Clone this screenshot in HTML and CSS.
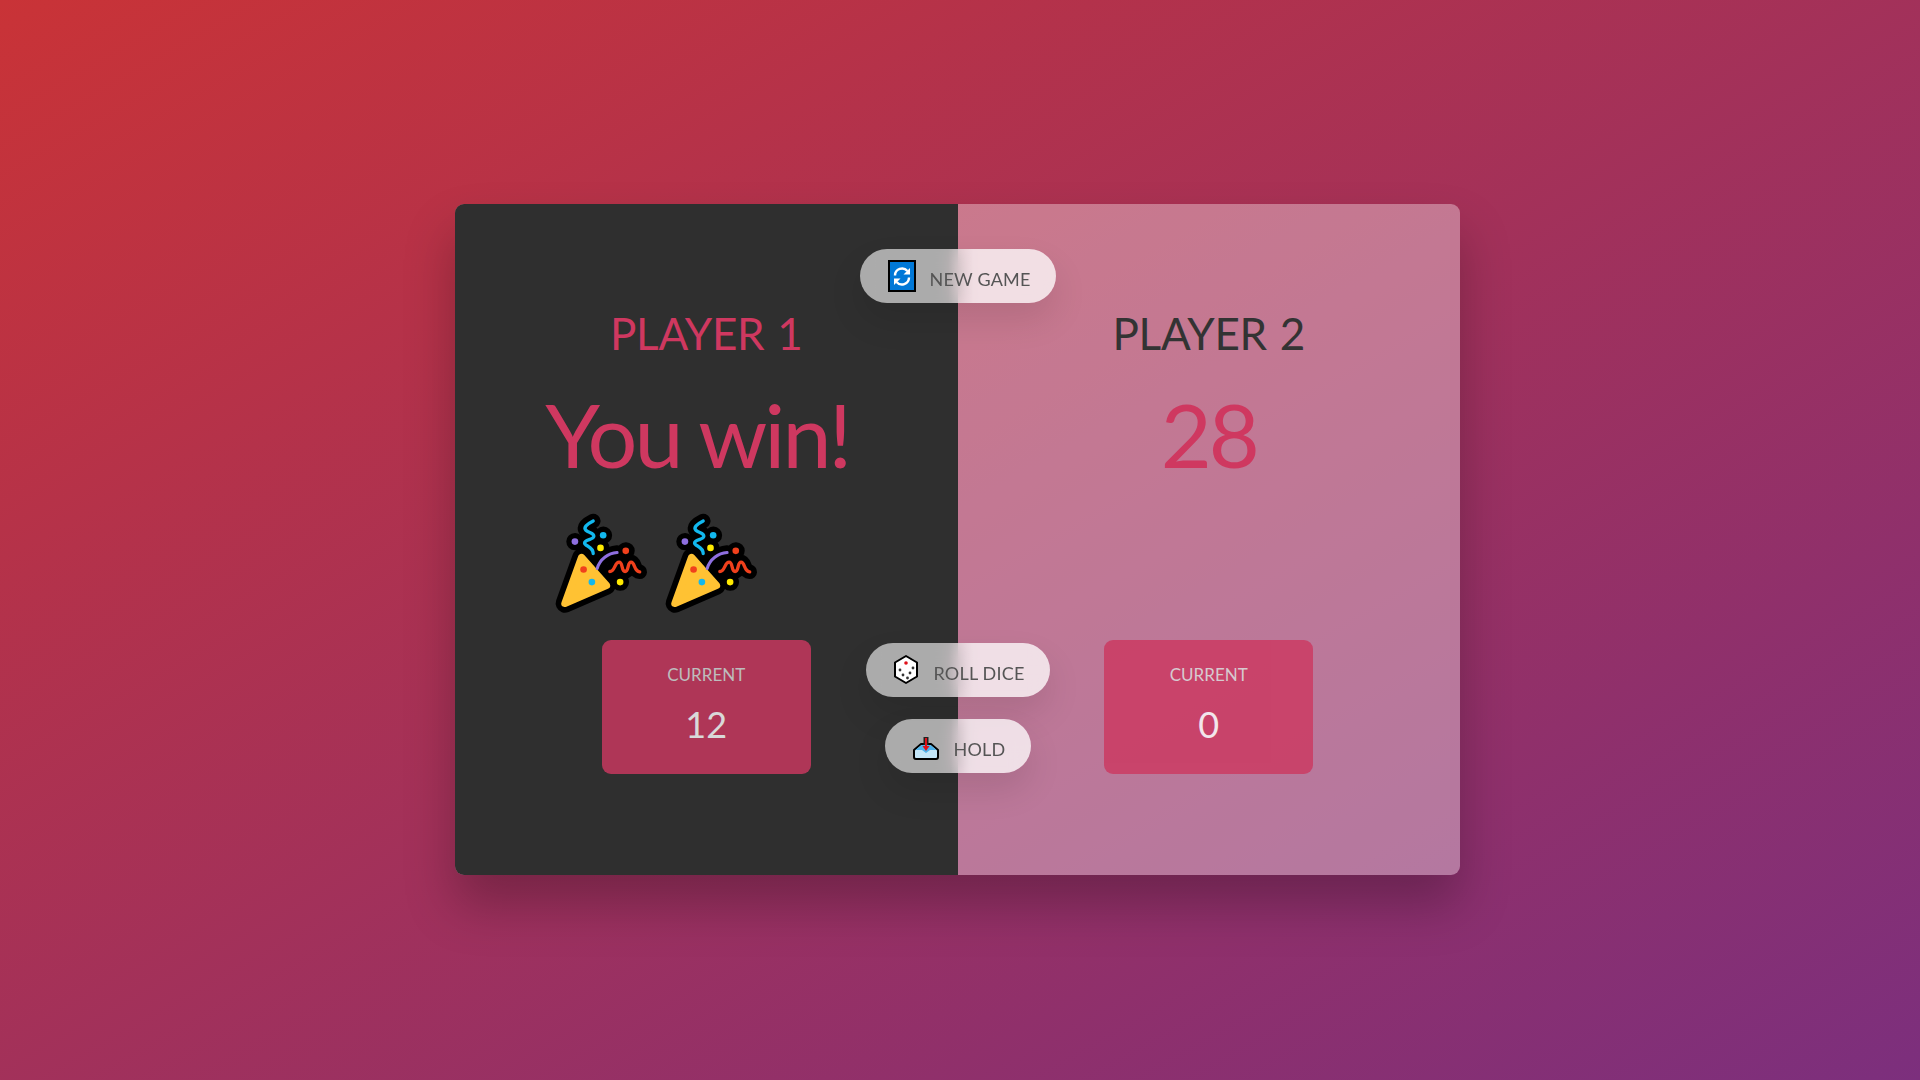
FILE: index.html
```html
<!DOCTYPE html>
<html>
	<head>
		<title>Pig Game</title>
		<meta name="viewport" content="width=device-width, initial-scale=1.0"/>
		<link rel="stylesheet" href="styles.css">
	</head>
	<body>
		<main class="game">
			<section class="player player-winner">
				<h2 class="name">Player 1</h2>
				<div class="score score-win">
					<p>You win!</p>
					<div class="poppers">
						<svg class="popper" viewBox="24 24 331 331"><use href="#popper"/></svg>
						<svg class="popper" viewBox="24 24 331 331"><use href="#popper"/></svg>
					</div>
				</div>
				<div class="current">
					<p class="current-label">Current</p>
					<p class="current-score">12</p>
				</div>
			</section>
			<section class="player">
				<h2 class="name">Player 2</h2>
				<div class="score"><p>28</p></div>
				<div class="current">
					<p class="current-label">Current</p>
					<p class="current-score">0</p>
				</div>
			</section>
			<button class="btn btn-new">
				<svg class="icon" viewBox="0 0 28 32">
					<rect x="1" y="1" width="26" height="30" fill="#0078d7" stroke="#000" stroke-width="2"/>
					<path d="M7 15.500a7 7 0 0 1 12.400-4.400" fill="none" stroke="#fff" stroke-width="2.400"/>
					<path d="M22 8v6.500h-6.500z" fill="#fff"/>
					<path d="M21 17.500a7 7 0 0 1-12.400 4.400" fill="none" stroke="#fff" stroke-width="2.400"/>
					<path d="M6 25v-6.500h6.500z" fill="#fff"/>
				</svg>
				New game
			</button>
			<button class="btn btn-roll">
				<svg class="icon" viewBox="0 0 28 32">
					<path d="M14 2l11 6.500v14L14 29 3 22.500v-14z" fill="#fff" stroke="#000" stroke-width="2" stroke-linejoin="round"/>
					<circle cx="14" cy="9" r="1.800" fill="#e0101a"/>
					<circle cx="8" cy="16" r="1.400" fill="#333"/>
					<circle cx="11" cy="21" r="1.400" fill="#333"/>
					<circle cx="21" cy="14" r="1.400" fill="#333"/>
					<circle cx="18" cy="19" r="1.400" fill="#333"/>
					<circle cx="15.500" cy="24" r="1.400" fill="#333"/>
				</svg>
				Roll dice
			</button>
			<button class="btn btn-hold">
				<svg class="icon" viewBox="0 0 28 32">
					<path d="M2 20l7-6h10l7 6v7a2 2 0 0 1-2 2H4a2 2 0 0 1-2-2z" fill="#c4e6f8" stroke="#000" stroke-width="2" stroke-linejoin="round"/>
					<path d="M3.500 20H10l4 3 4-3h6.500L18.500 15h-9z" fill="#4fb2ea"/>
					<path d="M11.500 7h5v8h-5z" fill="#222"/>
					<path d="M14 8v10" stroke="#e0101a" stroke-width="2"/>
					<path d="M10.500 16h7L14 21z" fill="#e0101a"/>
				</svg>
				Hold
			</button>
		</main>
		<svg class="defs" width="0" height="0">
			<defs>
				<g id="popper" fill="none" stroke-linecap="round" stroke-linejoin="round">
					<g stroke="#000">
						<path d="M125 170L75 308 200 254z" fill="#000" stroke-width="56"/>
						<g stroke-width="44">
							<path id="streamer-blue" d="M160 60C140 70 130 80 138 88C146 96 162 96 162 106C162 116 134 116 134 126C134 136 160 136 160 158"/>
							<path id="streamer-arc" d="M172 203C180 175 205 157 232 155"/>
							<path id="streamer-red" d="M210 212C226 212 224 184 238 184C250 184 244 212 256 212C268 212 262 184 274 184C286 184 282 212 300 213"/>
						</g>
						<g stroke-width="52">
							<path d="M105 122h1M190 103h1M182 141h1M258 150h1M241 244h1"/>
						</g>
					</g>
					<path d="M125 170L75 308 200 254z" fill="#ffc233" stroke="#ffc233" stroke-width="22"/>
					<use href="#streamer-blue" stroke="#12b8ee" stroke-width="10"/>
					<use href="#streamer-arc" stroke="#8e6fe0" stroke-width="9"/>
					<use href="#streamer-red" stroke="#f0401c" stroke-width="10"/>
					<g stroke="none">
						<circle cx="105" cy="122" r="10" fill="#8e6fe0"/>
						<circle cx="190" cy="103" r="10" fill="#12b8ee"/>
						<circle cx="182" cy="141" r="10" fill="#ffea00"/>
						<circle cx="258" cy="150" r="10" fill="#f0401c"/>
						<circle cx="241" cy="244" r="10" fill="#ffea00"/>
						<circle cx="131" cy="206" r="10" fill="#f0401c"/>
						<circle cx="156" cy="244" r="10" fill="#12b8ee"/>
					</g>
				</g>
			</defs>
		</svg>
	</body>
</html>
```

FILE: styles.css
```css
* {
	box-sizing: border-box;
	margin: 0;
	padding: 0;
}
body {
	width: 100vw;
	height: 100vh;
	overflow: hidden;
	display: flex;
	align-items: center;
	justify-content: center;
	padding: 0 5px 1px 0;
	font-family: 'Lato', sans-serif;
	font-weight: 400;
	color: #333;
	background-image: linear-gradient(to top left, #7c2f7d 0%, #c93337 100%);
}

.defs {
	position: absolute;
}

.game {
	position: relative;
	width: 1005px;
	height: 671px;
	display: grid;
	grid-template-columns: 1fr 1fr;
	background-color: rgba(255, 255, 255, 0.35);
	box-shadow: 0 30px 50px rgba(0, 0, 0, 0.25);
	border-radius: 9px;
	overflow: hidden;
}

.player {
	display: flex;
	flex-direction: column;
	align-items: center;
	padding: 101px 0 0;
}
.player-winner {
	background-color: #2f2f2f;
}

.name {
	font-size: 44px;
	line-height: 56px;
	font-weight: 400;
	text-transform: uppercase;
	letter-spacing: -0.3px;
	word-spacing: 2px;
}
.player-winner .name {
	color: #cf3860;
}

.score {
	height: 259px;
	margin-top: 20px;
	font-size: 88px;
	line-height: 106px;
	letter-spacing: -3px;
	color: #cf3860;
}
.score-win {
	width: 322px;
}
.poppers {
	display: flex;
	margin: 22px 0 0 3px;
}
.popper {
	width: 110px;
	height: 110px;
	flex: none;
}

.current {
	width: 209px;
	height: 134px;
	padding: 24px 20px;
	text-align: center;
	color: #fff;
	background-color: #cc3860;
	opacity: 0.82;
	border-radius: 9px;
}
.current-label {
	font-size: 17px;
	line-height: 22px;
	text-transform: uppercase;
	color: #ddd;
}
.current-score {
	margin-top: 16px;
	font-size: 36px;
	line-height: 44px;
}

.btn {
	position: absolute;
	left: 50%;
	transform: translateX(-50%);
	display: flex;
	align-items: center;
	height: 54px;
	padding-top: 6px;
	font-family: inherit;
	font-size: 18px;
	line-height: 26px;
	letter-spacing: 0.2px;
	text-transform: uppercase;
	white-space: nowrap;
	color: #555;
	border: none;
	border-radius: 500px;
	background-color: transparent;
	background-image: linear-gradient(to right, rgba(255, 255, 255, 0.6) 45%, rgba(255, 255, 255, 0.76) 58%);
	backdrop-filter: blur(10px);
	box-shadow: 0 17px 35px rgba(0, 0, 0, 0.1);
}
.btn .icon {
	width: 28px;
	height: 32px;
	margin-top: -6px;
	margin-right: 14px;
}
.btn-new {
	top: 45px;
	width: 196px;
	padding-left: 28px;
}
.btn-roll {
	top: 439px;
	width: 184px;
	padding-left: 26px;
}
.btn-hold {
	top: 515px;
	width: 146px;
	padding-left: 27px;
}
```
